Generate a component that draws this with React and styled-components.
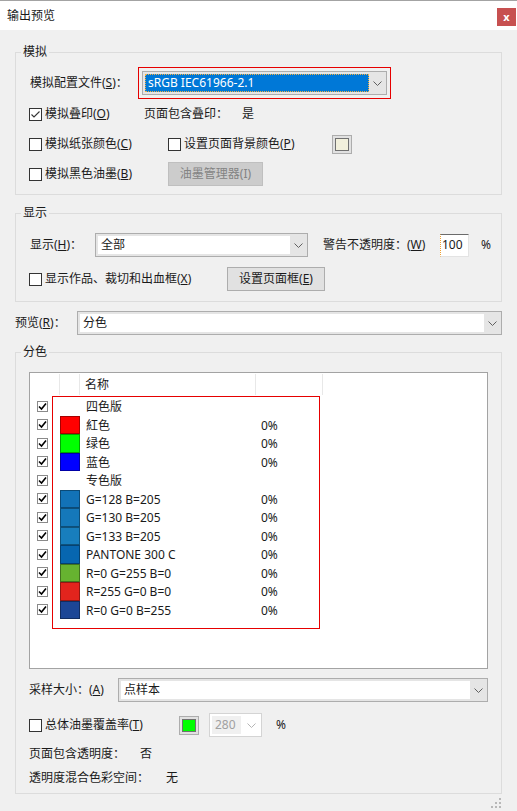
import styled, { createGlobalStyle } from 'styled-components';

const GlobalStyle = createGlobalStyle`
  body {
    margin: 0;
    background: #f0f0f0;
    font-family: "Noto Sans", "Noto Sans CJK SC", sans-serif;
    font-size: 12px;
    line-height: 16px;
    color: #1a1a1a;
  }
  * { box-sizing: border-box; }
`;

const Window = styled.div`
  width: 517px;
  height: 811px;
  display: flex;
  flex-direction: column;
  overflow: hidden;
  background: #f0f0f0;
`;

const TitleBar = styled.div`
  height: 30px;
  border-top: 1px solid #a3a3a3;
  background: #fff;
  display: flex;
  align-items: center;
  justify-content: space-between;
  padding: 0 1px 0 7px;
  flex-shrink: 0;
`;

const CloseButton = styled.div`
  width: 19px;
  height: 18px;
  background: #c75050;
  color: #fff;
  font-size: 11px;
  font-weight: bold;
  display: flex;
  align-items: center;
  justify-content: center;
  margin-top: 3px;
`;

const Body = styled.div`
  flex: 1;
  display: flex;
  flex-direction: column;
  padding: 14px 15px 0;
`;

const Group = styled.fieldset`
  margin: ${(p) => p.$mt || 0}px 0 0;
  padding: 0;
  border: 1px solid #dcdcdc;
  min-width: 0;
`;

const Legend = styled.legend`
  margin-left: 5px;
  padding: 0 2px;
  line-height: 16px;
`;

const GroupBody = styled.div`
  display: flex;
  flex-direction: column;
  padding: ${(p) => p.$pt}px 13px ${(p) => p.$pb}px;
`;

const Row = styled.div`
  display: flex;
  align-items: center;
  height: ${(p) => p.$h}px;
  margin-top: ${(p) => p.$mt || 0}px;
  flex-shrink: 0;
  white-space: nowrap;
`;

const Cell = styled.div`
  width: ${(p) => p.$w}px;
  flex-shrink: 0;
  display: flex;
  align-items: center;
  margin-left: ${(p) => p.$ml || 0}px;
`;

const Text = styled.span`
  margin-left: ${(p) => p.$ml || 0}px;
  color: ${(p) => (p.$muted ? '#8b8b8b' : 'inherit')};
`;

const Box = styled.span`
  width: 13px;
  height: 13px;
  border: 1px solid #333;
  background: #fff;
  display: inline-flex;
  align-items: center;
  justify-content: center;
  margin-right: 3px;
  flex-shrink: 0;
`;

const Highlight = styled.div`
  border: 1px solid #e60000;
  padding: 3px;
  display: flex;
`;

const SelectBox = styled.div`
  display: flex;
  width: ${(p) => (p.$w ? `${p.$w}px` : 'auto')};
  flex: ${(p) => (p.$w ? 'none' : 1)};
  height: 24px;
  border: 1px solid ${(p) => (p.$disabled ? '#d4d4d4' : '#adadad')};
  background: ${(p) => (p.$disabled ? '#fff' : '#e5e5e5')};
  padding: 2px 0 2px 2px;
`;

const Field = styled.div`
  flex: ${(p) => (p.$fit ? 'none' : 1)};
  width: ${(p) => (p.$fit ? `${p.$fit}px` : 'auto')};
  display: flex;
  align-items: center;
  padding-left: 3px;
  background: ${(p) => (p.$active ? '#0078d7' : p.$disabled ? '#f0f0f0' : '#fff')};
  color: ${(p) => (p.$active ? '#fff' : p.$disabled ? '#a0a0a0' : 'inherit')};
  outline: ${(p) => (p.$active ? '1px dotted #f5b041' : 'none')};
  outline-offset: -1px;
`;

const Arrow = styled.div`
  width: ${(p) => (p.$wide ? 'auto' : '17px')};
  flex: ${(p) => (p.$wide ? 1 : 'none')};
  display: flex;
  align-items: center;
  justify-content: center;
`;

const Button = styled.button`
  width: ${(p) => p.$w}px;
  height: 24px;
  padding: 0;
  font: inherit;
  border: 1px solid ${(p) => (p.disabled ? '#bfbfbf' : '#adadad')};
  background: ${(p) => (p.disabled ? '#cccccc' : '#e1e1e1')};
  color: ${(p) => (p.disabled ? '#838383' : '#1a1a1a')};
  flex-shrink: 0;
`;

const ColorButton = styled.div`
  width: 20px;
  height: 19px;
  border: 1px solid #adadad;
  background: #e1e1e1;
  padding: 2px;
  flex-shrink: 0;
`;

const ColorChip = styled.div`
  width: 100%;
  height: 100%;
  border: 1px solid #707070;
  background: ${(p) => p.$color};
`;

const NumInput = styled.div`
  width: 29px;
  height: 23px;
  background: #fff;
  border: 1px solid;
  border-color: #6b6b6b #e3e3e3 #e3e3e3 #6b6b6b;
  border-left: 1px dotted #f0a030;
  padding: 2px 0 0 1px;
  line-height: 16px;
  flex-shrink: 0;
`;

const ListBox = styled.div`
  position: relative;
  height: 297px;
  border: 1px solid #a3a3a3;
  background: #fff;
  flex-shrink: 0;
`;

const ListHeader = styled.div`
  display: flex;
  align-items: flex-start;
  height: 24px;
`;

const HeaderCell = styled.div`
  width: ${(p) => p.$w}px;
  height: 21px;
  margin-top: 1px;
  border-right: 1px solid #e8e8e8;
  padding-left: ${(p) => p.$pl || 0}px;
  line-height: 21px;
`;

const ListRow = styled.div`
  display: flex;
  align-items: center;
  height: 18.5px;
`;

const CheckCell = styled.div`
  width: 30px;
  padding-left: 7px;
  display: flex;
  align-items: center;
`;

const SmallBox = styled.span`
  width: 11px;
  height: 11px;
  border: 1px solid #8a8a8a;
  background: #fff;
  display: inline-flex;
  align-items: center;
  justify-content: center;
`;

const Swatch = styled.div`
  width: 20px;
  height: 100%;
  background: ${(p) => p.$color || 'transparent'};
  box-shadow: ${(p) => (p.$color ? 'inset 0 0 0 1px rgba(0,0,0,0.35)' : 'none')};
  flex-shrink: 0;
`;

const NameCell = styled.div`
  width: 176px;
  padding: 2px 0 0 6px;
`;

const PctCell = styled.div`
  padding: 2px 0 0 5px;
`;

const Annotation = styled.div`
  position: absolute;
  left: 22px;
  top: 23px;
  width: 268px;
  height: 233px;
  border: 1px solid #e60000;
  pointer-events: none;
`;

const Footer = styled.div`
  display: flex;
  justify-content: flex-end;
  padding: 4px 1px 0 0;
`;

const Chevron = ({ color = '#606060' }) => (
  <svg width="9" height="5" viewBox="0 0 9 5">
    <path d="M0.5 0.5 L4.5 4.5 L8.5 0.5" fill="none" stroke={color} strokeWidth="1" />
  </svg>
);

const CheckItem = ({ w, checked, children, muted }) => (
  <Cell $w={w}>
    <Box>
      {checked && (
        <svg width="11" height="11" viewBox="0 0 11 11">
          <path d="M1.5 5.5 L4 8 L9.5 2.5" fill="none" stroke="#333" strokeWidth="1.1" />
        </svg>
      )}
    </Box>
    <Text $muted={muted}>{children}</Text>
  </Cell>
);

const Select = ({ w, value, active }) => (
  <SelectBox $w={w}>
    <Field $active={active}>{value}</Field>
    <Arrow>
      <Chevron />
    </Arrow>
  </SelectBox>
);

const plates = [
  { name: '四色版' },
  { name: '紅色', color: '#ff0000', pct: '0%' },
  { name: '绿色', color: '#00ff00', pct: '0%' },
  { name: '蓝色', color: '#0000ff', pct: '0%' },
  { name: '专色版' },
  { name: 'G=128 B=205', color: '#1272b7', pct: '0%' },
  { name: 'G=130 B=205', color: '#1578ba', pct: '0%' },
  { name: 'G=133 B=205', color: '#187ebd', pct: '0%' },
  { name: 'PANTONE 300 C', color: '#0766b0', pct: '0%' },
  { name: 'R=0 G=255 B=0', color: '#66b330', pct: '0%' },
  { name: 'R=255 G=0 B=0', color: '#e2241d', pct: '0%' },
  { name: 'R=0 G=0 B=255', color: '#1c4696', pct: '0%' },
];

const App = () => {
  return (
    <Window>
      <GlobalStyle />
      <TitleBar>
        <span>输出预览</span>
        <CloseButton>x</CloseButton>
      </TitleBar>
      <Body>
        <Group>
          <Legend>模拟</Legend>
          <GroupBody $pt={7} $pb={5}>
            <Row $h={32}>
              <Cell $w={108} $ml={1}>模拟配置文件(<u>S</u>)：</Cell>
              <Highlight>
                <Select w={245} value="sRGB IEC61966-2.1" active />
              </Highlight>
            </Row>
            <Row $h={30}>
              <CheckItem w={115} checked>
                模拟叠印(<u>O</u>)
              </CheckItem>
              <Cell $w={98}>页面包含叠印：</Cell>
              <span>是</span>
            </Row>
            <Row $h={30}>
              <CheckItem w={139}>
                模拟纸张颜色(<u>C</u>)
              </CheckItem>
              <CheckItem w={164}>
                设置页面背景颜色(<u>P</u>)
              </CheckItem>
              <ColorButton>
                <ColorChip $color="#f2f0dc" />
              </ColorButton>
            </Row>
            <Row $h={30}>
              <CheckItem w={139}>
                模拟黑色油墨(<u>B</u>)
              </CheckItem>
              <Button $w={95} disabled>
                油墨管理器(I)
              </Button>
            </Row>
          </GroupBody>
        </Group>

        <Group $mt={10}>
          <Legend>显示</Legend>
          <GroupBody $pt={9} $pb={7}>
            <Row $h={30}>
              <Cell $w={65} $ml={1}>显示(<u>H</u>)：</Cell>
              <Select w={213} value="全部" />
              <Cell $w={117} $ml={15}>警告不透明度：(<u>W</u>)</Cell>
              <NumInput>100</NumInput>
              <Text $ml={12}>%</Text>
            </Row>
            <Row $h={30} $mt={4}>
              <CheckItem w={198}>
                显示作品、裁切和出血框(<u>X</u>)
              </CheckItem>
              <Button $w={98}>
                设置页面框(<u>E</u>)
              </Button>
            </Row>
          </GroupBody>
        </Group>

        <Row $h={26} $mt={8}>
          <Cell $w={62}>预览(<u>R</u>)：</Cell>
          <SelectBox>
            <Field>分色</Field>
            <Arrow>
              <Chevron />
            </Arrow>
          </SelectBox>
        </Row>

        <Group $mt={8}>
          <Legend>分色</Legend>
          <GroupBody $pt={12} $pb={5}>
            <ListBox>
              <ListHeader>
                <HeaderCell $w={30} />
                <HeaderCell $w={20} />
                <HeaderCell $w={176} $pl={5}>名称</HeaderCell>
                <HeaderCell $w={67} />
              </ListHeader>
              {plates.map((p) => (
                <ListRow key={p.name}>
                  <CheckCell>
                    <SmallBox>
                      <svg width="9" height="9" viewBox="0 0 9 9">
                        <path d="M1 4.5 L3.5 7 L8 1.5" fill="none" stroke="#000" strokeWidth="1.6" />
                      </svg>
                    </SmallBox>
                  </CheckCell>
                  <Swatch $color={p.color} />
                  <NameCell>{p.name}</NameCell>
                  <PctCell>{p.pct}</PctCell>
                </ListRow>
              ))}
              <Annotation />
            </ListBox>

            <Row $h={24} $mt={9}>
              <Cell $w={89}>采样大小：(<u>A</u>)</Cell>
              <SelectBox>
                <Field>点样本</Field>
                <Arrow>
                  <Chevron />
                </Arrow>
              </SelectBox>
            </Row>

            <Row $h={24} $mt={11}>
              <CheckItem w={150}>
                总体油墨覆盖率(<u>T</u>)
              </CheckItem>
              <ColorButton>
                <ColorChip $color="#00ff00" />
              </ColorButton>
              <Cell $w={53} $ml={10}>
                <SelectBox $w={53} $disabled>
                  <Field $fit={29} $disabled>280</Field>
                  <Arrow $wide>
                    <Chevron color="#b5b5b5" />
                  </Arrow>
                </SelectBox>
              </Cell>
              <Text $ml={14}>%</Text>
            </Row>

            <Row $h={20} $mt={7}>
              <Cell $w={111}>页面包含透明度：</Cell>
              <span>否</span>
            </Row>
            <Row $h={20} $mt={4}>
              <Cell $w={137}>透明度混合色彩空间：</Cell>
              <span>无</span>
            </Row>
          </GroupBody>
        </Group>
        <Footer>
          <svg width="10" height="10" viewBox="0 0 10 10">
            <g fill="#b8b8b8">
              <rect x="8" y="0" width="2" height="2" />
              <rect x="4" y="4" width="2" height="2" />
              <rect x="8" y="4" width="2" height="2" />
              <rect x="0" y="8" width="2" height="2" />
              <rect x="4" y="8" width="2" height="2" />
              <rect x="8" y="8" width="2" height="2" />
            </g>
          </svg>
        </Footer>
      </Body>
    </Window>
  );
};

export default App;
